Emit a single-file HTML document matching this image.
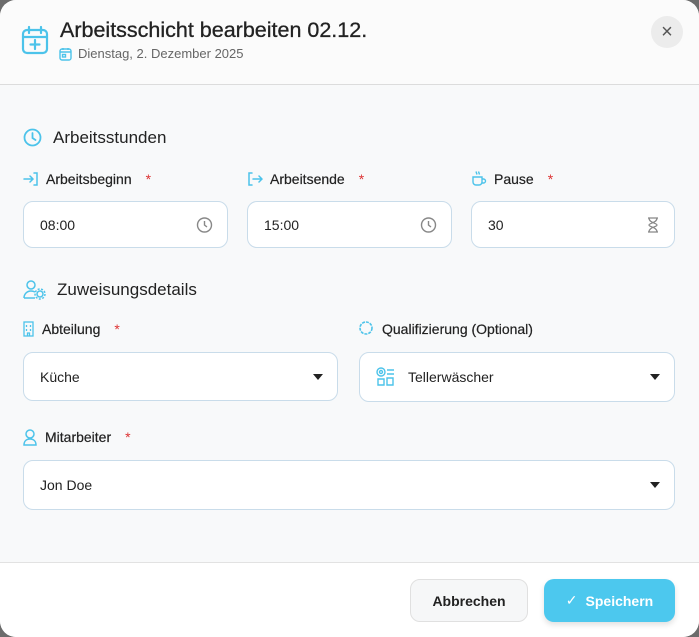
<!DOCTYPE html>
<html><head><meta charset="utf-8"><style>
*{box-sizing:border-box;margin:0;padding:0}
html,body{width:699px;height:637px;overflow:hidden;background:#6b6b6b;font-family:"Liberation Sans",sans-serif;color:#222}
.dlg{position:absolute;left:0;top:0;width:699px;height:637px;background:#f8f9fa;border-radius:16px;overflow:hidden}
.hdr{position:absolute;left:0;top:0;width:699px;height:85px;background:#fbfbfb;border-bottom:1px solid #dcdcdc}
.t{position:absolute;left:60px;top:18px;font-size:21.5px;color:#222;-webkit-text-stroke:0.3px #222}
.st{position:absolute;left:78px;top:46px;font-size:13px;color:#666}
.x{position:absolute;left:651px;top:16px;width:32px;height:32px;border-radius:50%;background:#ececec;color:#555;text-align:center;line-height:32px;font-size:20px}
.ft{position:absolute;left:0;top:562px;width:699px;height:75px;background:#fff;border-top:1px solid #e2e2e2}
.sec{position:absolute;font-size:17px;color:#222}
.lbl{position:absolute;font-size:14px;color:#222;-webkit-text-stroke:0.2px #222}
.lbl b{color:#d33;font-weight:normal;margin-left:14px;-webkit-text-stroke:0}
.in{position:absolute;background:#fff;border:1px solid #c9dcea;border-radius:10px;font-size:14px;color:#222;padding-left:16px;display:flex;align-items:center}
.in .r{position:absolute;right:14px;top:50%;transform:translateY(-50%)}
.car{width:0;height:0;border-left:5px solid transparent;border-right:5px solid transparent;border-top:6px solid #222}
svg{position:absolute}
.btn{position:absolute;top:579px;height:43px;border-radius:10px;font-size:14px;font-weight:bold;display:flex;align-items:center;justify-content:center}
</style></head><body><div class="dlg">
<div class="hdr">
<svg style="left:21px;top:25px" width="28" height="30" viewBox="0 0 28 30" fill="none" stroke="#4cc3ea" stroke-width="2.2" stroke-linecap="round"><rect x="2" y="5" width="24" height="23" rx="4"/><path d="M8 2v6M20 2v6M2 12h24M14 15v9M9.5 19.5h9"/></svg>
<div class="t">Arbeitsschicht bearbeiten 02.12.</div>
<svg style="left:59px;top:47px" width="13" height="14" viewBox="0 0 13 14" fill="none" stroke="#4cc3ea" stroke-width="1.4"><rect x="1" y="2" width="11" height="11" rx="2"/><path d="M4 1v2M9 1v2M1 5h11"/><rect x="3.5" y="7.5" width="3" height="2.5"/></svg>
<div class="st">Dienstag, 2. Dezember 2025</div>
<div class="x">×</div>
</div>
<svg style="left:23px;top:128px" width="19" height="19" viewBox="0 0 19 19" fill="none" stroke="#4cc3ea" stroke-width="1.8" stroke-linecap="round"><circle cx="9.5" cy="9.5" r="8"/><path d="M9.5 5v5l3 2"/></svg>
<div class="sec" style="left:53px;top:128px">Arbeitsstunden</div>
<svg style="left:23px;top:172px" width="16" height="14" viewBox="0 0 16 14" fill="none" stroke="#4cc3ea" stroke-width="1.5" stroke-linecap="round"><path d="M1 7h9M7 4l3 3-3 3M11 1h3v12h-3"/></svg>
<div class="lbl" style="left:46px;top:171px">Arbeitsbeginn<b>*</b></div>
<svg style="left:247px;top:172px" width="16" height="14" viewBox="0 0 16 14" fill="none" stroke="#4cc3ea" stroke-width="1.5" stroke-linecap="round"><path d="M5 1H2v12h3M6 7h9M12 4l3 3-3 3"/></svg>
<div class="lbl" style="left:270px;top:171px">Arbeitsende<b>*</b></div>
<svg style="left:471px;top:170px" width="16" height="17" viewBox="0 0 16 17" fill="none" stroke="#4cc3ea" stroke-width="1.4"><path d="M2 7h9v5a3 3 0 0 1-3 3H5a3 3 0 0 1-3-3zM11 9h1.5a2 2 0 0 1 0 4H11M5 1.5l1 3M7.5 1.5l1 3"/></svg>
<div class="lbl" style="left:494px;top:171px">Pause<b>*</b></div>
<div class="in" style="left:23px;top:201px;width:205px;height:47px">08:00<svg class="r" width="17" height="17" viewBox="0 0 17 17" fill="none" stroke="#888" stroke-width="1.4"><circle cx="8.5" cy="8.5" r="7"/><path d="M8.5 4.5v4l2.5 2"/></svg></div>
<div class="in" style="left:247px;top:201px;width:205px;height:47px">15:00<svg class="r" width="17" height="17" viewBox="0 0 17 17" fill="none" stroke="#888" stroke-width="1.4"><circle cx="8.5" cy="8.5" r="7"/><path d="M8.5 4.5v4l2.5 2"/></svg></div>
<div class="in" style="left:471px;top:201px;width:204px;height:47px">30<svg class="r" width="14" height="16" viewBox="0 0 14 16" fill="none" stroke="#888" stroke-width="1.3"><path d="M2 1h10M2 15h10M3 1c0 5 8 5 8 7s-8 2-8 7M11 1c0 5-8 5-8 7s8 2 8 7"/></svg></div>
<svg style="left:23px;top:280px" width="24" height="20" viewBox="0 0 24 20" fill="none" stroke="#4cc3ea" stroke-width="1.5"><circle cx="8" cy="5" r="4"/><path d="M1 18c0-4 3-7 7-7 2 0 3 .5 4 1M1 18h11"/><circle cx="17" cy="14" r="3"/><circle cx="17" cy="14" r="5" stroke-dasharray="2 1.5"/></svg>
<div class="sec" style="left:57px;top:280px">Zuweisungsdetails</div>
<svg style="left:23px;top:321px" width="11" height="16" viewBox="0 0 11 16" fill="none" stroke="#4cc3ea" stroke-width="1.3"><rect x="1" y="1" width="9" height="14"/><path d="M3.5 4v2M7.5 4v2M3.5 8v2M7.5 8v2M4.5 15v-3h2v3"/></svg>
<div class="lbl" style="left:42px;top:321px">Abteilung<b>*</b></div>
<svg style="left:358px;top:320px" width="16" height="16" viewBox="0 0 16 16" fill="none" stroke="#4cc3ea" stroke-width="1.6"><circle cx="8" cy="8" r="6" stroke-dasharray="3 1"/></svg>
<div class="lbl" style="left:382px;top:321px">Qualifizierung (Optional)</div>
<div class="in" style="left:23px;top:352px;width:315px;height:49px">Küche<div class="car r"></div></div>
<div class="in" style="left:359px;top:352px;width:316px;height:50px"><svg style="position:relative;margin-right:12px" width="20" height="20" viewBox="0 0 20 20" fill="none" stroke="#4cc3ea" stroke-width="1.4"><circle cx="5" cy="5" r="4"/><circle cx="5" cy="5" r="1.5"/><path d="M11 3h7M11 7h7M2 12h6v6H2zM11 11h6v7h-6z"/></svg>Tellerwäscher<div class="car r"></div></div>
<svg style="left:23px;top:429px" width="14" height="17" viewBox="0 0 14 17" fill="none" stroke="#4cc3ea" stroke-width="1.5"><circle cx="7" cy="5" r="4"/><path d="M1 16c0-4 2.5-6 6-6s6 2 6 6z"/></svg>
<div class="lbl" style="left:45px;top:429px">Mitarbeiter<b>*</b></div>
<div class="in" style="left:23px;top:460px;width:652px;height:50px">Jon Doe<div class="car r"></div></div>
<div class="ft"></div>
<div class="btn" style="left:410px;width:118px;background:#f6f7f8;border:1px solid #e0e0e0;color:#222">Abbrechen</div>
<div class="btn" style="left:544px;width:131px;background:#4cc8ee;color:#fff;box-shadow:0 3px 6px rgba(0,0,0,.12)"><span style="font-weight:normal;margin-right:8px">✓</span>Speichern</div>
</div></body></html>
